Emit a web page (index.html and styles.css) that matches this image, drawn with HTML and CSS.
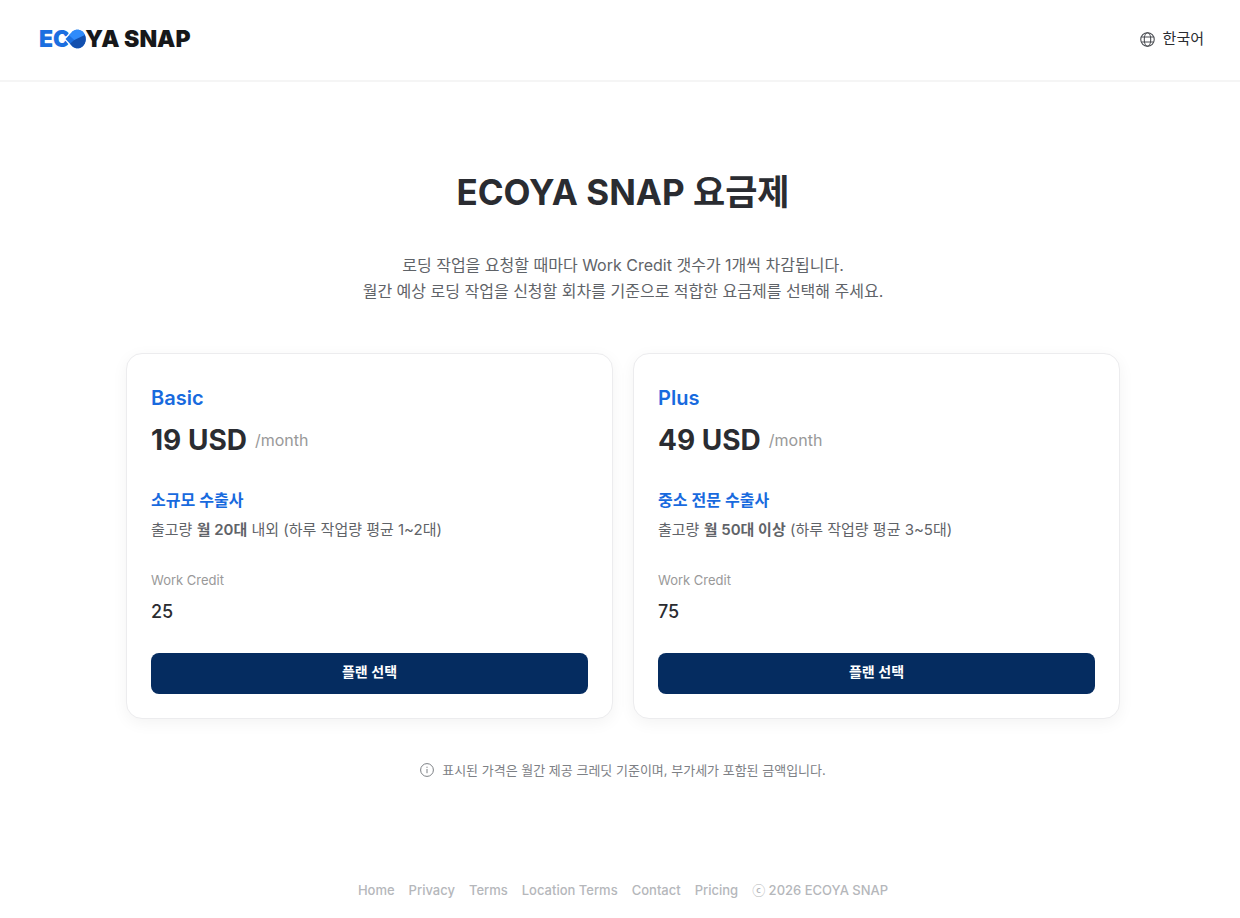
FILE: index.html
```html
<!DOCTYPE html>
<html lang="ko">
<head>
    <meta charset="UTF-8">
    <meta name="viewport" content="width=device-width, initial-scale=1.0">
    <title>ECOYA SNAP 요금제</title>
    <link rel="stylesheet" href="styles.css">
</head>
<body>
    <header class="header">
        <a class="logo" href="#">
            <span class="logo-blue">EC</span>
            <svg class="logo-mark" viewBox="0 0 22 20" aria-hidden="true">
                <path d="M8.500 0 0 10 8.500 20" fill="#fff"/>
                <path d="M1.500 10 8.500 2.500C11.500 0 15.500 .2 18.500 2.600 22.800 6.300 22.800 13.700 18.500 17.400 15.500 19.800 11.500 20 8.500 17.500Z" fill="#1b6fe0"/>
                <path d="M5 6.200 8.500 2.500C11.500 0 15.500 .2 18.500 2.600L20.800 6 12.500 13Z" fill="#2f8bfb"/>
                <path d="M6 14.800 8.500 17.500C11.500 20 15.500 19.800 18.500 17.400 22 14.500 22.500 9.500 20.800 6L10.300 11Z" fill="#124fae"/>
            </svg>
            <span class="logo-dark">YA SNAP</span>
        </a>
        <button class="language" type="button">
            <svg class="globe" viewBox="0 0 14 14" aria-hidden="true">
                <circle cx="7" cy="7" r="6.300"/>
                <ellipse cx="7" cy="7" rx="3" ry="6.300"/>
                <path d="M1.300 4.700h11.400M1.300 9.300h11.400"/>
            </svg>
            한국어
        </button>
    </header>

    <main class="pricing">
        <h1 class="title">ECOYA SNAP 요금제</h1>
        <p class="intro">로딩 작업을 요청할 때마다 Work Credit 갯수가 1개씩 차감됩니다.<br>월간 예상 로딩 작업을 신청할 회차를 기준으로 적합한 요금제를 선택해 주세요.</p>

        <div class="plans">
            <section class="plan">
                <h2 class="plan-name">Basic</h2>
                <p class="price">19 USD <span class="period">/month</span></p>
                <h3 class="target">소규모 수출사</h3>
                <p class="volume">출고량 <strong>월 20대</strong> 내외 (하루 작업량 평균 1~2대)</p>
                <p class="credit-label">Work Credit</p>
                <p class="credit">25</p>
                <button class="select-button" type="button">플랜 선택</button>
            </section>
            <section class="plan">
                <h2 class="plan-name">Plus</h2>
                <p class="price">49 USD <span class="period">/month</span></p>
                <h3 class="target">중소 전문 수출사</h3>
                <p class="volume">출고량 <strong>월 50대 이상</strong> (하루 작업량 평균 3~5대)</p>
                <p class="credit-label">Work Credit</p>
                <p class="credit">75</p>
                <button class="select-button" type="button">플랜 선택</button>
            </section>
        </div>

        <p class="notice">
            <svg class="info" viewBox="0 0 14 14" aria-hidden="true">
                <circle cx="7" cy="7" r="6.400"/>
                <path d="M7 6v4.200M7 3.700v1.200"/>
            </svg>
            표시된 가격은 월간 제공 크레딧 기준이며, 부가세가 포함된 금액입니다.
        </p>
    </main>

    <footer class="footer">
        <a href="#">Home</a>
        <a href="#">Privacy</a>
        <a href="#">Terms</a>
        <a href="#">Location Terms</a>
        <a href="#">Contact</a>
        <a href="#">Pricing</a>
        <span class="copyright">ⓒ 2026 ECOYA SNAP</span>
    </footer>
</body>
</html>
```

FILE: styles.css
```css
* {
    box-sizing: border-box;
}
body {
    margin: 0;
    font-family: Inter, "Noto Sans CJK KR", sans-serif;
    color: #2a2c31;
    background: white;
}
h1, h2, h3, p {
    margin: 0;
}
button {
    font-family: inherit;
    border: none;
    cursor: pointer;
}
.header {
    display: flex;
    align-items: center;
    justify-content: space-between;
    height: 82px;
    padding: 0 36px 2px 39px;
    border-bottom: 2px solid #f5f5f5;
}
.logo {
    display: flex;
    align-items: center;
    font-size: 23px;
    font-weight: 900;
    line-height: 30px;
    text-decoration: none;
}
.logo-blue {
    color: #1b6fe0;
}
.logo-dark {
    color: #17181a;
}
.logo-mark {
    width: 22px;
    height: 20px;
    margin: 0 -1px 0 -6px;
}
.language {
    display: flex;
    align-items: center;
    gap: 8px;
    padding: 0;
    font-size: 15px;
    line-height: 24px;
    color: #2a2c31;
    background: none;
}
.globe {
    width: 15px;
    height: 15px;
    fill: none;
    stroke: #4a4d52;
}
.pricing {
    padding: 83px 120px 0 126px;
}
.title {
    font-size: 35px;
    font-weight: 700;
    line-height: 54px;
    text-align: center;
}
.intro {
    margin-top: 33px;
    font-size: 16px;
    line-height: 26px;
    text-align: center;
    color: #5f6368;
}
.plans {
    display: grid;
    grid-template-columns: 1fr 1fr;
    gap: 20px;
    margin-top: 49px;
}
.plan {
    display: flex;
    flex-direction: column;
    padding: 32px 24px 24px;
    border: 1px solid #ececee;
    border-radius: 16px;
    background: white;
    box-shadow: 0 4px 16px rgba(0, 0, 0, 0.05);
}
.plan-name {
    font-size: 20px;
    font-weight: 600;
    line-height: 24px;
    color: #186ade;
}
.price {
    display: flex;
    align-items: center;
    gap: 8px;
    margin-top: 12px;
    font-size: 28px;
    font-weight: 700;
    line-height: 36px;
}
.period {
    font-size: 16px;
    font-weight: 400;
    color: #999;
}
.target {
    margin-top: 30px;
    font-size: 16px;
    font-weight: 600;
    line-height: 24px;
    color: #186ade;
}
.volume {
    margin-top: 6px;
    font-size: 15px;
    line-height: 24px;
    color: #5f6368;
}
.volume strong {
    font-weight: 600;
}
.credit-label {
    margin-top: 28px;
    font-size: 13px;
    line-height: 20px;
    color: #999;
}
.credit {
    margin-top: 8px;
    font-size: 18px;
    font-weight: 500;
    line-height: 28px;
}
.select-button {
    height: 41px;
    margin-top: 27px;
    padding: 0 0 5px;
    border-radius: 8px;
    font-size: 14px;
    font-weight: 600;
    color: white;
    background: #052c60;
}
.notice {
    display: flex;
    align-items: center;
    justify-content: center;
    gap: 8px;
    margin-top: 40px;
    font-size: 13px;
    line-height: 22px;
    color: #7d8085;
}
.info {
    width: 14px;
    height: 14px;
    fill: none;
    stroke: #7d8085;
}
.footer {
    display: flex;
    justify-content: center;
    gap: 14px;
    padding: 99px 0 17px 6px;
    font-size: 13px;
    font-weight: 500;
    line-height: 20px;
    color: #b5b7bb;
}
.footer a {
    color: inherit;
    text-decoration: none;
}
```
